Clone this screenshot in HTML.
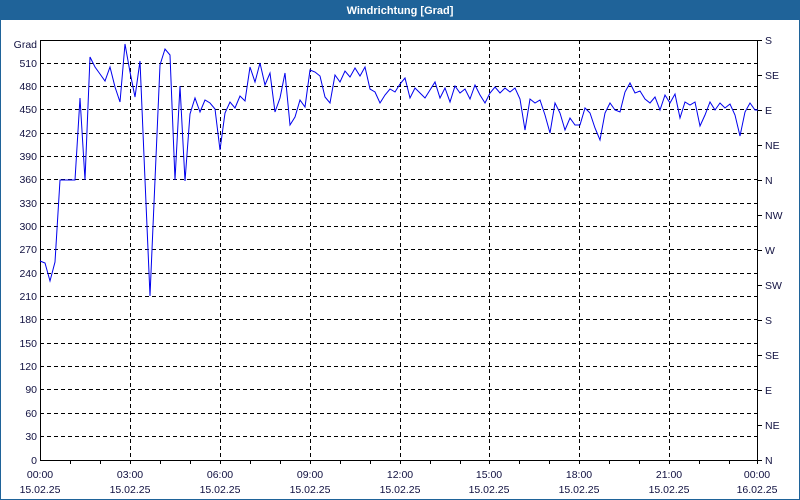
<!DOCTYPE html>
<html><head><meta charset="utf-8"><style>
html,body{margin:0;padding:0;width:800px;height:500px;overflow:hidden;background:#fff}
</style></head><body>
<svg width="800" height="500" xmlns="http://www.w3.org/2000/svg" font-family="Liberation Sans, sans-serif" font-size="10.5">
<rect x="0" y="0" width="800" height="500" fill="#fff"/>
<rect x="0.5" y="0.5" width="799" height="499" fill="none" stroke="#1f6399"/>
<rect x="0" y="0" width="800" height="20" fill="#1f6399"/>
<text x="400" y="14" fill="#fff" font-weight="bold" font-size="11" text-anchor="middle">Windrichtung [Grad]</text>
<g stroke="#000" stroke-dasharray="4,3" stroke-width="1">
<line x1="40" y1="63.5" x2="758" y2="63.5"/><line x1="40" y1="86.5" x2="758" y2="86.5"/><line x1="40" y1="109.5" x2="758" y2="109.5"/>
<line x1="40" y1="133.5" x2="758" y2="133.5"/><line x1="40" y1="156.5" x2="758" y2="156.5"/><line x1="40" y1="179.5" x2="758" y2="179.5"/>
<line x1="40" y1="203.5" x2="758" y2="203.5"/><line x1="40" y1="226.5" x2="758" y2="226.5"/><line x1="40" y1="249.5" x2="758" y2="249.5"/>
<line x1="40" y1="273.5" x2="758" y2="273.5"/><line x1="40" y1="296.5" x2="758" y2="296.5"/><line x1="40" y1="319.5" x2="758" y2="319.5"/>
<line x1="40" y1="343.5" x2="758" y2="343.5"/><line x1="40" y1="366.5" x2="758" y2="366.5"/><line x1="40" y1="389.5" x2="758" y2="389.5"/>
<line x1="40" y1="413.5" x2="758" y2="413.5"/><line x1="40" y1="436.5" x2="758" y2="436.5"/>
<line x1="130.5" y1="40" x2="130.5" y2="460"/><line x1="220.5" y1="40" x2="220.5" y2="460"/><line x1="310.5" y1="40" x2="310.5" y2="460"/>
<line x1="400.5" y1="40" x2="400.5" y2="460"/><line x1="489.5" y1="40" x2="489.5" y2="460"/><line x1="579.5" y1="40" x2="579.5" y2="460"/>
<line x1="669.5" y1="40" x2="669.5" y2="460"/>
</g>
<rect x="40.5" y="40.5" width="717" height="420" fill="none" stroke="#000"/>
<g stroke="#000">
<path d="M70.5 460v4M100.5 460v4M130.5 460v4M160.5 460v4M190.5 460v4M220.5 460v4M250.5 460v4M280.5 460v4M310.5 460v4M340.5 460v4M370.5 460v4M400.5 460v4M430.5 460v4M460.5 460v4M489.5 460v4M519.5 460v4M549.5 460v4M579.5 460v4M609.5 460v4M639.5 460v4M669.5 460v4M699.5 460v4M729.5 460v4M757.5 460v4"/>
<path d="M758 40.5h4M758 75.5h4M758 110.5h4M758 145.5h4M758 180.5h4M758 215.5h4M758 250.5h4M758 285.5h4M758 320.5h4M758 355.5h4M758 390.5h4M758 425.5h4M758 460.5h4"/>
</g>
<polyline fill="none" stroke="#0000ee" stroke-width="1" points="40,261 45,263 50,281 55,262 60,180 65,180 70,180 75,180 80,98 85,180 90,57 95,67 100,74 105,81 110,67 115,87 120,102 125,44 130,72 135,97 140,61 145,180 150,296 155,180 160,65 165,49 170,55 175,180 180,86 185,181 190,114 195,98 200,112 205,100 210,103 215,109 220,150 225,113 230,102 235,108 240,96 245,101 250,67 255,82 260,63 265,85 270,73 275,112 280,98 285,73 290,125 295,117 300,100 305,107 310,70 315,72 320,76 325,97 330,103 335,75 340,82 345,71 350,77 355,68 360,76 365,67 370,89 375,92 380,103 385,95 390,89 395,92 400,84 405,78 410,98 415,88 420,93 425,98 430,90 435,82 440,98 445,88 450,102 455,86 460,93 465,89 470,99 475,85 480,95 485,103 490,93 495,87 500,93 505,88 510,92 515,88 520,99 525,130 530,99 535,103 540,100 545,115 550,133 555,103 560,113 565,130 570,118 575,125 580,125 585,108 590,113 595,128 600,140 605,113 610,103 615,110 620,112 625,92 630,83 635,93 640,91 645,99 650,103 655,97 660,110 665,95 670,103 675,94 680,118 685,102 690,105 695,102 700,126 705,115 710,102 715,110 720,103 725,108 730,104 735,115 740,136 745,112 750,103 755,110 758,110"/>
<g fill="#101040" text-anchor="end">
<text x="37" y="48">Grad</text><text x="37" y="67">510</text><text x="37" y="90">480</text><text x="37" y="113">450</text>
<text x="37" y="137">420</text><text x="37" y="160">390</text><text x="37" y="183">360</text><text x="37" y="207">330</text>
<text x="37" y="230">300</text><text x="37" y="253">270</text><text x="37" y="277">240</text><text x="37" y="300">210</text>
<text x="37" y="323">180</text><text x="37" y="347">150</text><text x="37" y="370">120</text><text x="37" y="393">90</text>
<text x="37" y="417">60</text><text x="37" y="440">30</text><text x="37" y="464">0</text>
</g>
<g fill="#101040">
<text x="765" y="44">S</text><text x="765" y="79">SE</text><text x="765" y="114">E</text><text x="765" y="149">NE</text>
<text x="765" y="184">N</text><text x="765" y="219">NW</text><text x="765" y="254">W</text><text x="765" y="289">SW</text>
<text x="765" y="324">S</text><text x="765" y="359">SE</text><text x="765" y="394">E</text><text x="765" y="429">NE</text><text x="765" y="464">N</text>
</g>
<g fill="#101040" text-anchor="middle">
<text x="40" y="478">00:00</text><text x="40" y="493">15.02.25</text>
<text x="130" y="478">03:00</text><text x="130" y="493">15.02.25</text>
<text x="220" y="478">06:00</text><text x="220" y="493">15.02.25</text>
<text x="310" y="478">09:00</text><text x="310" y="493">15.02.25</text>
<text x="400" y="478">12:00</text><text x="400" y="493">15.02.25</text>
<text x="489" y="478">15:00</text><text x="489" y="493">15.02.25</text>
<text x="579" y="478">18:00</text><text x="579" y="493">15.02.25</text>
<text x="669" y="478">21:00</text><text x="669" y="493">15.02.25</text>
<text x="757" y="478">00:00</text><text x="757" y="493">16.02.25</text>
</g>
</svg>
</body></html>
